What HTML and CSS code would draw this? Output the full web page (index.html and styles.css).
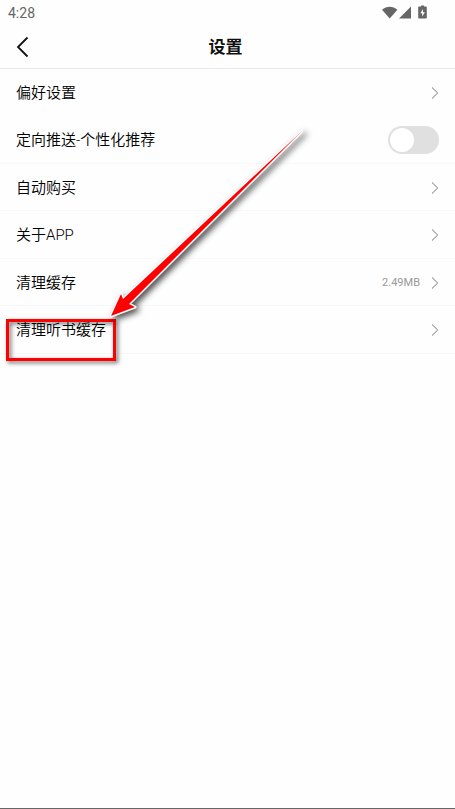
FILE: index.html
```html
<!DOCTYPE html>
<html lang="zh-CN">
<head>
    <meta charset="UTF-8">
    <meta name="viewport" content="width=device-width, initial-scale=1.0">
    <title>设置</title>
    <link rel="stylesheet" href="styles.css">
</head>
<body>
    <div class="status-bar">
        <span class="time">4:28</span>
        <svg class="status-icons" width="48" height="16" viewBox="0 0 48 16" fill="#666">
            <path d="M0 4.800C4.500 .8 11 .8 15.400 4.800L7.700 13.500Z"/>
            <path d="M29 1.500V13.500H17Z"/>
            <path fill-rule="evenodd" d="M39 .5h3v1h2q.8 0 .8.8V12.700q0 .8-.8.8h-7q-.8 0-.8-.8V2.300q0-.8.8-.8h2zM41 4L38.300 8.200H40.200V11.500L42.900 7.300H41z"/>
        </svg>
    </div>

    <header class="nav-bar">
        <button class="back" type="button" aria-label="返回">
            <svg width="14" height="22" viewBox="0 0 14 22" fill="none" stroke="#111" stroke-width="1.800">
                <path d="M11.500 1.500L2 11L11.500 20.500"/>
            </svg>
        </button>
        <h1>设置</h1>
    </header>

    <main class="settings">
        <a class="row" href="#">
            <span class="label">偏好设置</span>
            <svg class="arrow" viewBox="0 0 8 12"><path d="M1 .5L6.700 6L1 11.500"/></svg>
        </a>
        <div class="row line">
            <label class="label" for="push">定向推送-个性化推荐</label>
            <input class="switch" type="checkbox" id="push">
        </div>
        <a class="row line" href="#">
            <span class="label">自动购买</span>
            <svg class="arrow" viewBox="0 0 8 12"><path d="M1 .5L6.700 6L1 11.500"/></svg>
        </a>
        <a class="row line" href="#">
            <span class="label">关于APP</span>
            <svg class="arrow" viewBox="0 0 8 12"><path d="M1 .5L6.700 6L1 11.500"/></svg>
        </a>
        <a class="row line" href="#">
            <span class="label">清理缓存</span>
            <span class="value">2.49MB</span>
            <svg class="arrow" viewBox="0 0 8 12"><path d="M1 .5L6.700 6L1 11.500"/></svg>
        </a>
        <a class="row line" href="#">
            <span class="label">清理听书缓存</span>
            <svg class="arrow" viewBox="0 0 8 12"><path d="M1 .5L6.700 6L1 11.500"/></svg>
        </a>

        <!-- 标注 -->
        <div class="mark-box"></div>
        <svg class="mark-arrow" width="210" height="205" viewBox="0 0 210 205">
            <path d="M4 193L14 171L16 176L195 8L22 181L28 184Z" fill="#fff" stroke="#fff" stroke-width="3" stroke-linejoin="round"/>
            <path d="M4 193L14 171L16 176L195 8L22 181L28 184Z" fill="#f00"/>
        </svg>
    </main>
</body>
</html>
```
FILE: styles.css
```css
* {
    box-sizing: border-box;
}

body {
    margin: 0;
    min-height: 100vh;
    display: flex;
    flex-direction: column;
    background-color: #fefefe;
    border-bottom: 1px solid #666;
    color: #111;
    font-family: Roboto, "Noto Sans CJK SC", sans-serif;
}

.status-bar {
    display: flex;
    justify-content: space-between;
    align-items: center;
    height: 25px;
    padding: 0 25px 0 8px;
}

.time {
    color: #666;
    font-size: 14px;
    line-height: 26px;
}

.nav-bar {
    display: grid;
    grid-template-columns: 40px 1fr 40px;
    align-items: center;
    height: 44px;
    border-bottom: 1px solid #e8e8e8;
}

.back {
    display: flex;
    align-items: center;
    height: 43px;
    padding: 0 0 0 16px;
    border: none;
    background: none;
    cursor: pointer;
}

.nav-bar h1 {
    margin: 0 4px 0 0;
    font-size: 17px;
    font-weight: bold;
    line-height: 24px;
    text-align: center;
}

.settings {
    position: relative;
    flex: 1;
}

.row {
    display: flex;
    align-items: center;
    height: 47px;
    padding: 1px 16px 0;
    color: #000;
    text-decoration: none;
}

.row:nth-child(even) {
    height: 48px;
}

.line {
    border-bottom: 1px solid #f8f8f8;
}

.label {
    flex: 1;
    font-size: 15px;
    font-weight: 350;
    line-height: 22px;
}

.value {
    margin-right: 11px;
    color: #999;
    font-size: 11px;
}

.arrow {
    width: 8px;
    height: 12px;
    fill: none;
    stroke: #777;
    stroke-width: 1;
}

.switch {
    appearance: none;
    width: 51px;
    height: 28px;
    margin: 0;
    padding: 2px;
    border-radius: 14px;
    background-color: #e0e0e0;
    cursor: pointer;
}

.switch::before {
    content: "";
    display: block;
    width: 24px;
    height: 24px;
    border-radius: 50%;
    background-color: #fff;
}

.switch:checked {
    background-color: #4cd964;
}

.switch:checked::before {
    margin-left: 23px;
}

.mark-box {
    position: absolute;
    top: 250px;
    left: 6px;
    width: 110px;
    height: 42px;
    border: 3px solid #f00;
    filter: drop-shadow(2px 2px 2px rgba(0, 0, 0, 0.6));
    pointer-events: none;
}

.mark-arrow {
    position: absolute;
    top: 54px;
    left: 107px;
    filter: drop-shadow(3px 3px 3px rgba(0, 0, 0, 0.7));
    pointer-events: none;
}
```
